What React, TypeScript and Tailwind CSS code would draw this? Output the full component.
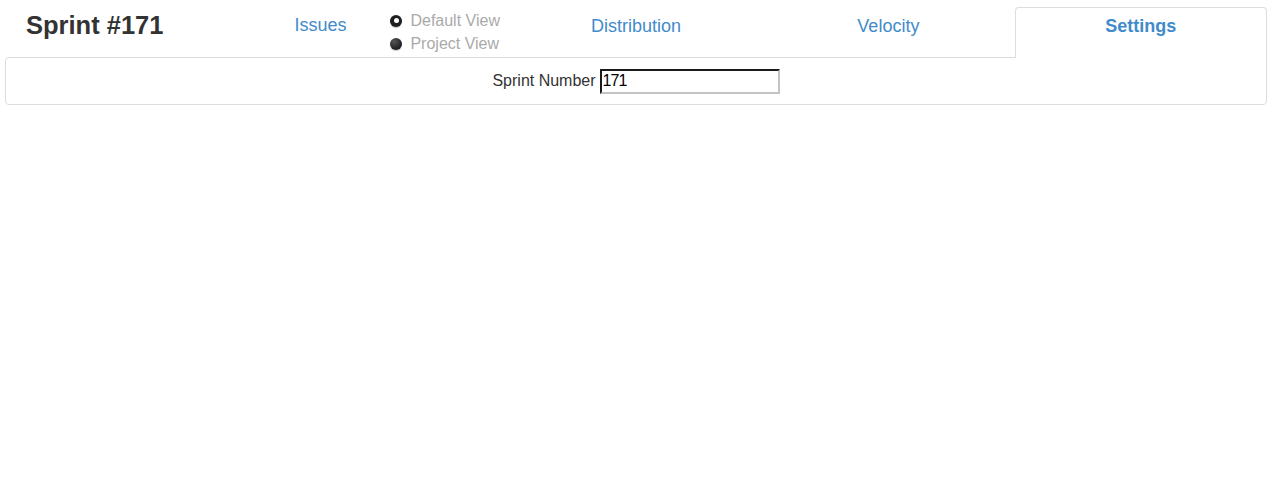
const tabLink = "text-[18px] leading-[20px] text-[#428bca]";

const RadioDot = ({ checked }: { checked: boolean }) =>
    checked ? (
        <span className="w-[12px] h-[12px] rounded-full bg-[#1e1e1e] flex items-center justify-center shadow-[0_1px_1px_rgba(0,0,0,0.25)]">
            <span className="w-[5px] h-[5px] rounded-full bg-white" />
        </span>
    ) : (
        <span className="w-[12px] h-[12px] rounded-full bg-[radial-gradient(circle_at_35%_30%,#555,#1e1e1e_70%)] shadow-[0_1px_1px_rgba(0,0,0,0.25)]" />
    );

const App = () => {
    return (
        <div className="min-h-screen bg-white pl-[5px] pr-[9px] pt-[7px] font-['Liberation_Sans',Arial,sans-serif] text-[#333]">
            <ul className="grid grid-cols-5 relative z-10 -mb-px">
                <li className="h-[51px] pl-[21px] pt-[3px]">
                    <h1 className="text-[25.5px] leading-[30px] font-bold text-[#333]">Sprint #171</h1>
                </li>
                <li className="h-[51px] flex items-start">
                    <a className={`${tabLink} pl-[37px] pt-[8px]`}>Issues</a>
                    <div className="ml-[44px] pt-[2px] flex flex-col text-[16px] leading-[23px] text-[#aaa]">
                        <label className="flex items-center gap-[8px]">
                            <RadioDot checked={true} />
                            Default View
                        </label>
                        <label className="flex items-center gap-[8px]">
                            <RadioDot checked={false} />
                            Project View
                        </label>
                    </div>
                </li>
                <li className="h-[51px] pt-[8px] text-center">
                    <a className={tabLink}>Distribution</a>
                </li>
                <li className="h-[51px] pt-[8px] text-center">
                    <a className={tabLink}>Velocity</a>
                </li>
                <li className="h-[51px] pt-[7px] text-center bg-white border border-b-0 border-[#ddd] rounded-t-[4px]">
                    <a className={`${tabLink} font-bold`}>Settings</a>
                </li>
            </ul>
            <div className="h-[48px] border border-[#ddd] rounded-[4px] rounded-tr-none flex items-center justify-center">
                <label className="text-[16px] text-[#333] mr-[4px]">Sprint Number</label>
                <input
                    defaultValue="171"
                    className="w-[180px] h-[25px] px-[1px] text-[16px] tracking-[-1px] text-black border-2 border-t-[#1a1a1a] border-l-[#1a1a1a] border-b-[#c4c4c4] border-r-[#c4c4c4] outline-none"
                />
            </div>
        </div>
    );
};

export default App;
